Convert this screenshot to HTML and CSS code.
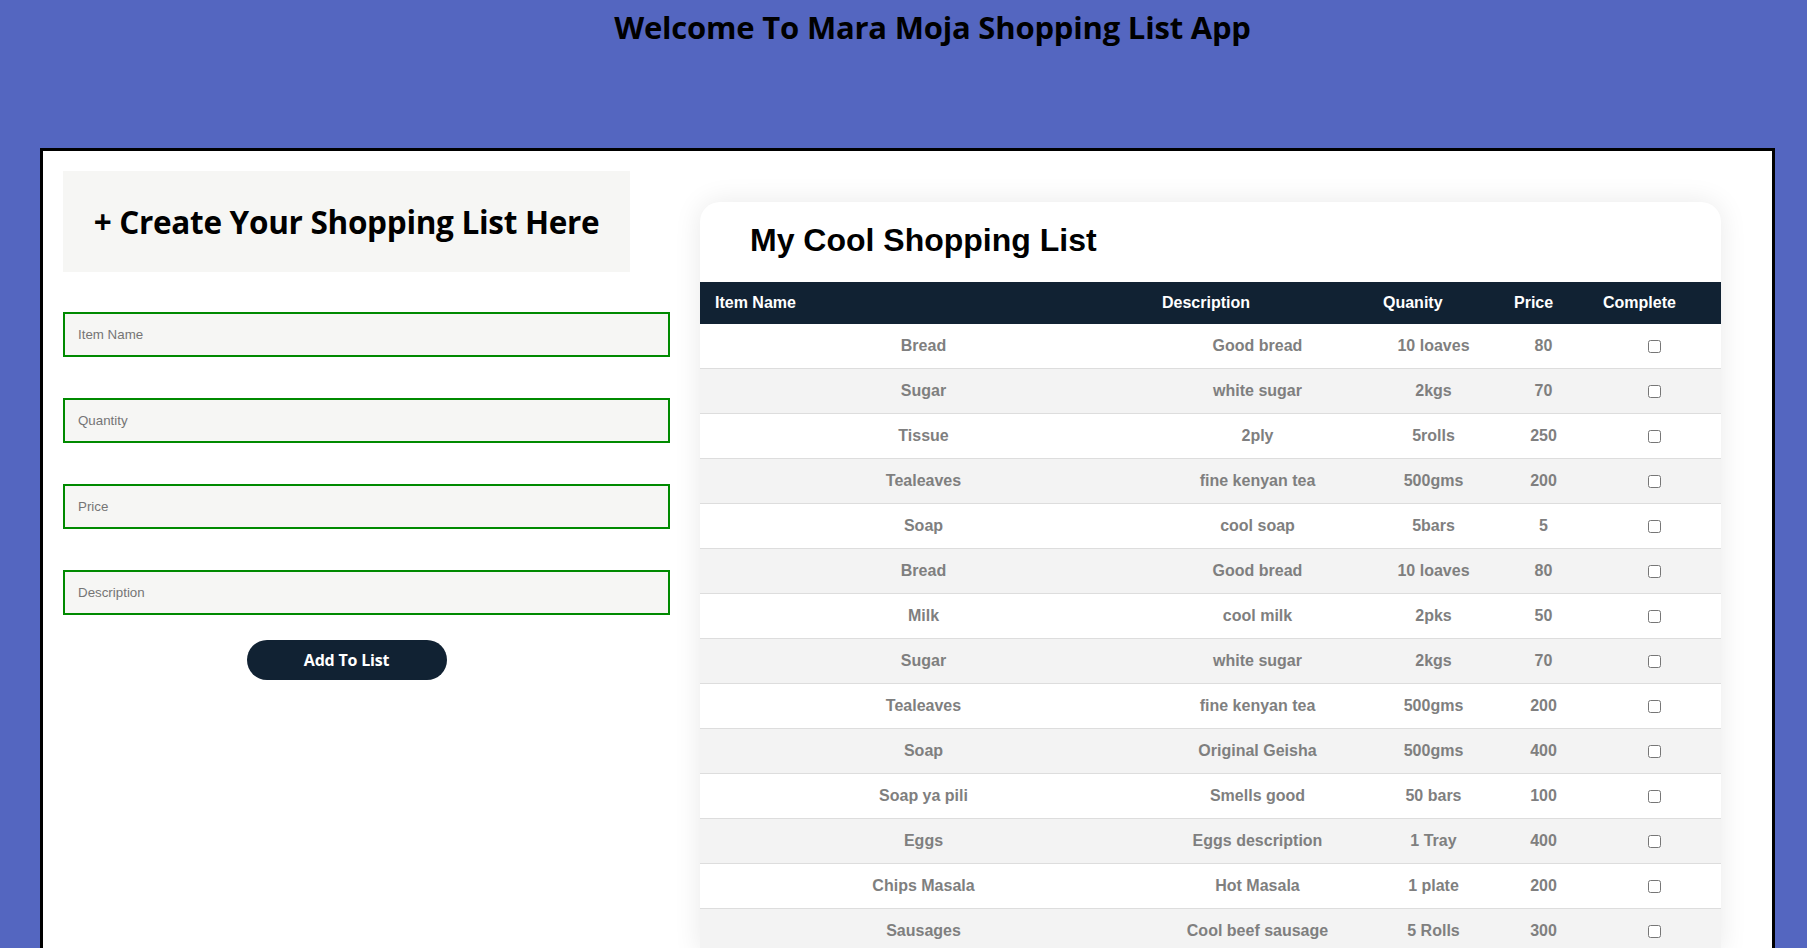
FILE: index.html
```html
<!DOCTYPE html>
<html lang="en">
<head>
<meta charset="utf-8">
<title>Mara Moja Shopping List App</title>
<link rel="stylesheet" href="styles.css">
</head>
<body>
<h1 class="app-title">Welcome To Mara Moja Shopping List App</h1>
<main class="container">
  <section class="form-col">
    <div class="form-head"><h2>+ Create Your Shopping List Here</h2></div>
    <form class="item-form">
      <input class="field" type="text" placeholder="Item Name">
      <input class="field" type="text" placeholder="Quantity">
      <input class="field" type="text" placeholder="Price">
      <input class="field" type="text" placeholder="Description">
      <div class="btn-row"><button class="add-btn" type="button">Add To List</button></div>
    </form>
  </section>
  <section class="card">
    <h2 class="card-title">My Cool Shopping List</h2>
    <table class="list">
      <colgroup>
        <col class="c-name"><col class="c-desc"><col class="c-qty"><col class="c-price"><col class="c-done">
      </colgroup>
      <thead>
        <tr><th>Item Name</th><th>Description</th><th>Quanity</th><th>Price</th><th>Complete</th></tr>
      </thead>
      <tbody>
        <tr><td>Bread</td><td>Good bread</td><td>10 loaves</td><td>80</td><td><input type="checkbox"></td></tr>
        <tr><td>Sugar</td><td>white sugar</td><td>2kgs</td><td>70</td><td><input type="checkbox"></td></tr>
        <tr><td>Tissue</td><td>2ply</td><td>5rolls</td><td>250</td><td><input type="checkbox"></td></tr>
        <tr><td>Tealeaves</td><td>fine kenyan tea</td><td>500gms</td><td>200</td><td><input type="checkbox"></td></tr>
        <tr><td>Soap</td><td>cool soap</td><td>5bars</td><td>5</td><td><input type="checkbox"></td></tr>
        <tr><td>Bread</td><td>Good bread</td><td>10 loaves</td><td>80</td><td><input type="checkbox"></td></tr>
        <tr><td>Milk</td><td>cool milk</td><td>2pks</td><td>50</td><td><input type="checkbox"></td></tr>
        <tr><td>Sugar</td><td>white sugar</td><td>2kgs</td><td>70</td><td><input type="checkbox"></td></tr>
        <tr><td>Tealeaves</td><td>fine kenyan tea</td><td>500gms</td><td>200</td><td><input type="checkbox"></td></tr>
        <tr><td>Soap</td><td>Original Geisha</td><td>500gms</td><td>400</td><td><input type="checkbox"></td></tr>
        <tr><td>Soap ya pili</td><td>Smells good</td><td>50 bars</td><td>100</td><td><input type="checkbox"></td></tr>
        <tr><td>Eggs</td><td>Eggs description</td><td>1 Tray</td><td>400</td><td><input type="checkbox"></td></tr>
        <tr><td>Chips Masala</td><td>Hot Masala</td><td>1 plate</td><td>200</td><td><input type="checkbox"></td></tr>
        <tr><td>Sausages</td><td>Cool beef sausage</td><td>5 Rolls</td><td>300</td><td><input type="checkbox"></td></tr>
      </tbody>
    </table>
  </section>
</main>
</body>
</html>
```
FILE: styles.css
```css
* { box-sizing: border-box; }

html, body {
  margin: 0;
  padding: 0;
}

body {
  background: #5466c0;
  font-family: "Liberation Sans", Arial, sans-serif;
}

.app-title {
  margin: 0;
  height: 148px;
  padding: 6px 0 0 58px;
  text-align: center;
  font-family: "Open Sans", "Noto Sans", sans-serif;
  font-weight: 700;
  font-size: 31px;
  line-height: 42px;
  letter-spacing: -0.2px;
  color: #000;
}

.container {
  margin: 0 32px 0 40px;
  background: #fff;
  border: 3px solid #000;
  padding: 20px 0 40px 20px;
  display: flex;
  align-items: flex-start;
  gap: 30px;
}

.form-col {
  width: 607px;
  flex: none;
}

.form-head {
  width: 567px;
  height: 101px;
  background: #f6f6f4;
  display: flex;
  align-items: center;
  justify-content: center;
}

.form-head h2 {
  margin: 0;
  font-family: "Open Sans", "Noto Sans", sans-serif;
  font-weight: 700;
  font-size: 31.5px;
  letter-spacing: -0.3px;
  color: #000;
}

.item-form {
  display: flex;
  flex-direction: column;
  gap: 41px;
  padding-top: 40px;
}

.field {
  width: 607px;
  height: 45px;
  margin: 0;
  border: 2px solid #008a00;
  background: #f6f6f4;
  padding: 0 13px;
  font-family: "Liberation Sans", Arial, sans-serif;
  font-size: 13.33px;
  color: #333;
  outline: none;
}

.field::placeholder {
  color: #757575;
}

.btn-row {
  width: 567px;
  display: flex;
  justify-content: center;
  margin-top: -16px;
}

.add-btn {
  width: 200px;
  height: 40px;
  border: none;
  border-radius: 20px;
  background: #112233;
  color: #fff;
  font-family: "Open Sans", "Noto Sans", sans-serif;
  font-weight: 700;
  font-size: 16px;
  letter-spacing: -0.2px;
  cursor: pointer;
}

.card {
  width: 1021px;
  flex: none;
  margin-top: 31px;
  background: #fff;
  border-radius: 20px 20px 0 0;
  box-shadow: 0 0 28px rgba(0, 0, 0, 0.09);
  overflow: hidden;
}

.card-title {
  margin: 0;
  padding: 20px 50px 23px;
  font-family: "Liberation Sans", Arial, sans-serif;
  font-weight: 700;
  font-size: 32px;
  line-height: 37px;
  color: #000;
}

.list {
  width: 1021px;
  table-layout: fixed;
  border-collapse: separate;
  border-spacing: 0;
  font-family: "Liberation Sans", Arial, sans-serif;
  font-size: 16px;
  font-weight: 700;
}

.c-name { width: 447px; }
.c-desc { width: 221px; }
.c-qty { width: 131px; }
.c-price { width: 89px; }
.c-done { width: 133px; }

.list thead th {
  height: 42px;
  padding: 0 15px;
  background: #112233;
  color: #fff;
  text-align: left;
  font-weight: 700;
}

.list tbody td {
  height: 45px;
  padding: 0;
  text-align: center;
  color: #7f7f7f;
  border-bottom: 1px solid #dddddd;
  background: #fff;
}

.list tbody tr:nth-child(even) td {
  background: #f3f3f3;
}

.list input[type="checkbox"] {
  margin: 0;
  width: 13px;
  height: 13px;
  vertical-align: middle;
}
```
